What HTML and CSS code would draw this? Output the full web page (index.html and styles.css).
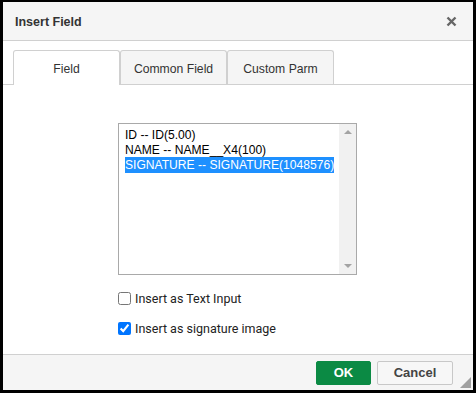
FILE: index.html
```html
<!DOCTYPE html>
<html lang="en">

<head>
    <meta charset="UTF-8">
    <title>Insert Field</title>
    <link rel="stylesheet" href="styles.css">
</head>

<body>
    <div class="dialog">
        <div class="dialog-header">
            <span class="dialog-title">Insert Field</span>
            <svg class="close" width="11" height="11" viewBox="0 0 11 11">
                <path d="M1.5 1.5 L9.5 9.5 M9.5 1.5 L1.5 9.5" stroke="#666" stroke-width="2.4" fill="none" />
            </svg>
        </div>

        <div class="dialog-body">
            <ul class="tabs">
                <li class="tab active">Field</li>
                <li class="tab">Common Field</li>
                <li class="tab">Custom Parm</li>
            </ul>

            <div class="tab-content">
                <div class="listbox">
                    <div class="options">
                        <div class="option">ID -- ID(5.00)</div>
                        <div class="option">NAME -- NAME__X4(100)</div>
                        <div class="option"><span class="selected">SIGNATURE -- SIGNATURE(1048576)</span></div>
                    </div>
                    <div class="scrollbar">
                        <span class="arrow up"></span>
                        <span class="arrow down"></span>
                    </div>
                </div>

                <label class="check">
                    <input type="checkbox">
                    <span>Insert as Text Input</span>
                </label>
                <label class="check">
                    <input type="checkbox" checked>
                    <span>Insert as signature image</span>
                </label>
            </div>
        </div>

        <div class="dialog-footer">
            <button class="btn btn-ok">OK</button>
            <button class="btn btn-cancel">Cancel</button>
            <span class="resize"></span>
        </div>
    </div>
</body>

</html>
```

FILE: styles.css
```css
body {
    margin: 0;
    padding: 0;
    font-family: "Liberation Sans", Arial, sans-serif;
    background-color: #000;
}

.dialog {
    width: 476px;
    height: 393px;
    box-sizing: border-box;
    border: 3px solid #000;
    border-top-width: 2px;
    background-color: #fff;
    display: flex;
    flex-direction: column;
}

.dialog-header {
    height: 39px;
    box-sizing: border-box;
    background-color: #f5f5f5;
    border-bottom: 1px solid #d0d0d0;
    display: flex;
    align-items: center;
    justify-content: space-between;
    padding: 1px 16px 0 12px;
}

.dialog-title {
    font-size: 12.5px;
    font-weight: bold;
    color: #333;
}

.close {
    display: block;
}

.dialog-body {
    flex: 1;
    padding-top: 9px;
}

.tabs {
    list-style-type: none;
    margin: 0;
    padding: 0 0 0 10px;
    display: flex;
    border-bottom: 1px solid #d0d0d0;
}

.tab {
    width: 107px;
    height: 34px;
    box-sizing: border-box;
    border: 1px solid #d0d0d0;
    border-bottom: none;
    border-radius: 3px 3px 0 0;
    background-color: #f5f5f5;
    margin-bottom: -1px;
    padding-top: 2px;
    display: flex;
    align-items: center;
    justify-content: center;
    font-size: 12.2px;
    color: #333;
}

.tab.active {
    background-color: #fff;
    height: 35px;
}

.tab-content {
    padding: 38px 0 0 115px;
}

.listbox {
    width: 239px;
    height: 152px;
    box-sizing: border-box;
    border: 1px solid #a9a9a9;
    display: flex;
}

.options {
    flex: 1;
    padding: 4px 0 0 6px;
    font-size: 12.1px;
    line-height: 15px;
    color: #000;
    white-space: nowrap;
    overflow: hidden;
}

.selected {
    background-color: #1e90ff;
    color: #fff;
    padding: 1px 0;
}

.scrollbar {
    width: 17px;
    background-color: #f1f1f1;
    display: flex;
    flex-direction: column;
    justify-content: space-between;
    align-items: center;
    padding: 6px 0;
}

.arrow {
    width: 0;
    height: 0;
    border-left: 4px solid transparent;
    border-right: 4px solid transparent;
}

.arrow.up {
    border-bottom: 4px solid #a3a3a3;
}

.arrow.down {
    border-top: 4px solid #a3a3a3;
}

.check {
    display: flex;
    align-items: center;
    margin-top: 16px;
    font-family: Roboto, "Liberation Sans", sans-serif;
    font-size: 12.5px;
    color: #222;
}

.check + .check {
    margin-top: 15px;
}

.check input {
    margin: 0 4px 0 0;
    width: 13px;
    height: 13px;
}

.dialog-footer {
    height: 36px;
    box-sizing: border-box;
    background-color: #f5f5f5;
    border-top: 1px solid #d0d0d0;
    display: flex;
    justify-content: flex-end;
    align-items: center;
    gap: 6px;
    padding-right: 20px;
    position: relative;
}

.btn {
    height: 24px;
    font-family: "Liberation Sans", Arial, sans-serif;
    font-size: 13px;
    font-weight: bold;
    border-radius: 2px;
    cursor: pointer;
}

.btn-ok {
    width: 55px;
    background-color: #0b8a44;
    border: 1px solid #0b8a44;
    color: #fff;
}

.btn-cancel {
    width: 76px;
    background-color: #f7f7f7;
    border: 1px solid #c8c8c8;
    color: #444;
}

.resize {
    position: absolute;
    right: 2px;
    bottom: 2px;
    width: 0;
    height: 0;
    border-left: 11px solid transparent;
    border-bottom: 11px solid #a0a0a0;
}
```
